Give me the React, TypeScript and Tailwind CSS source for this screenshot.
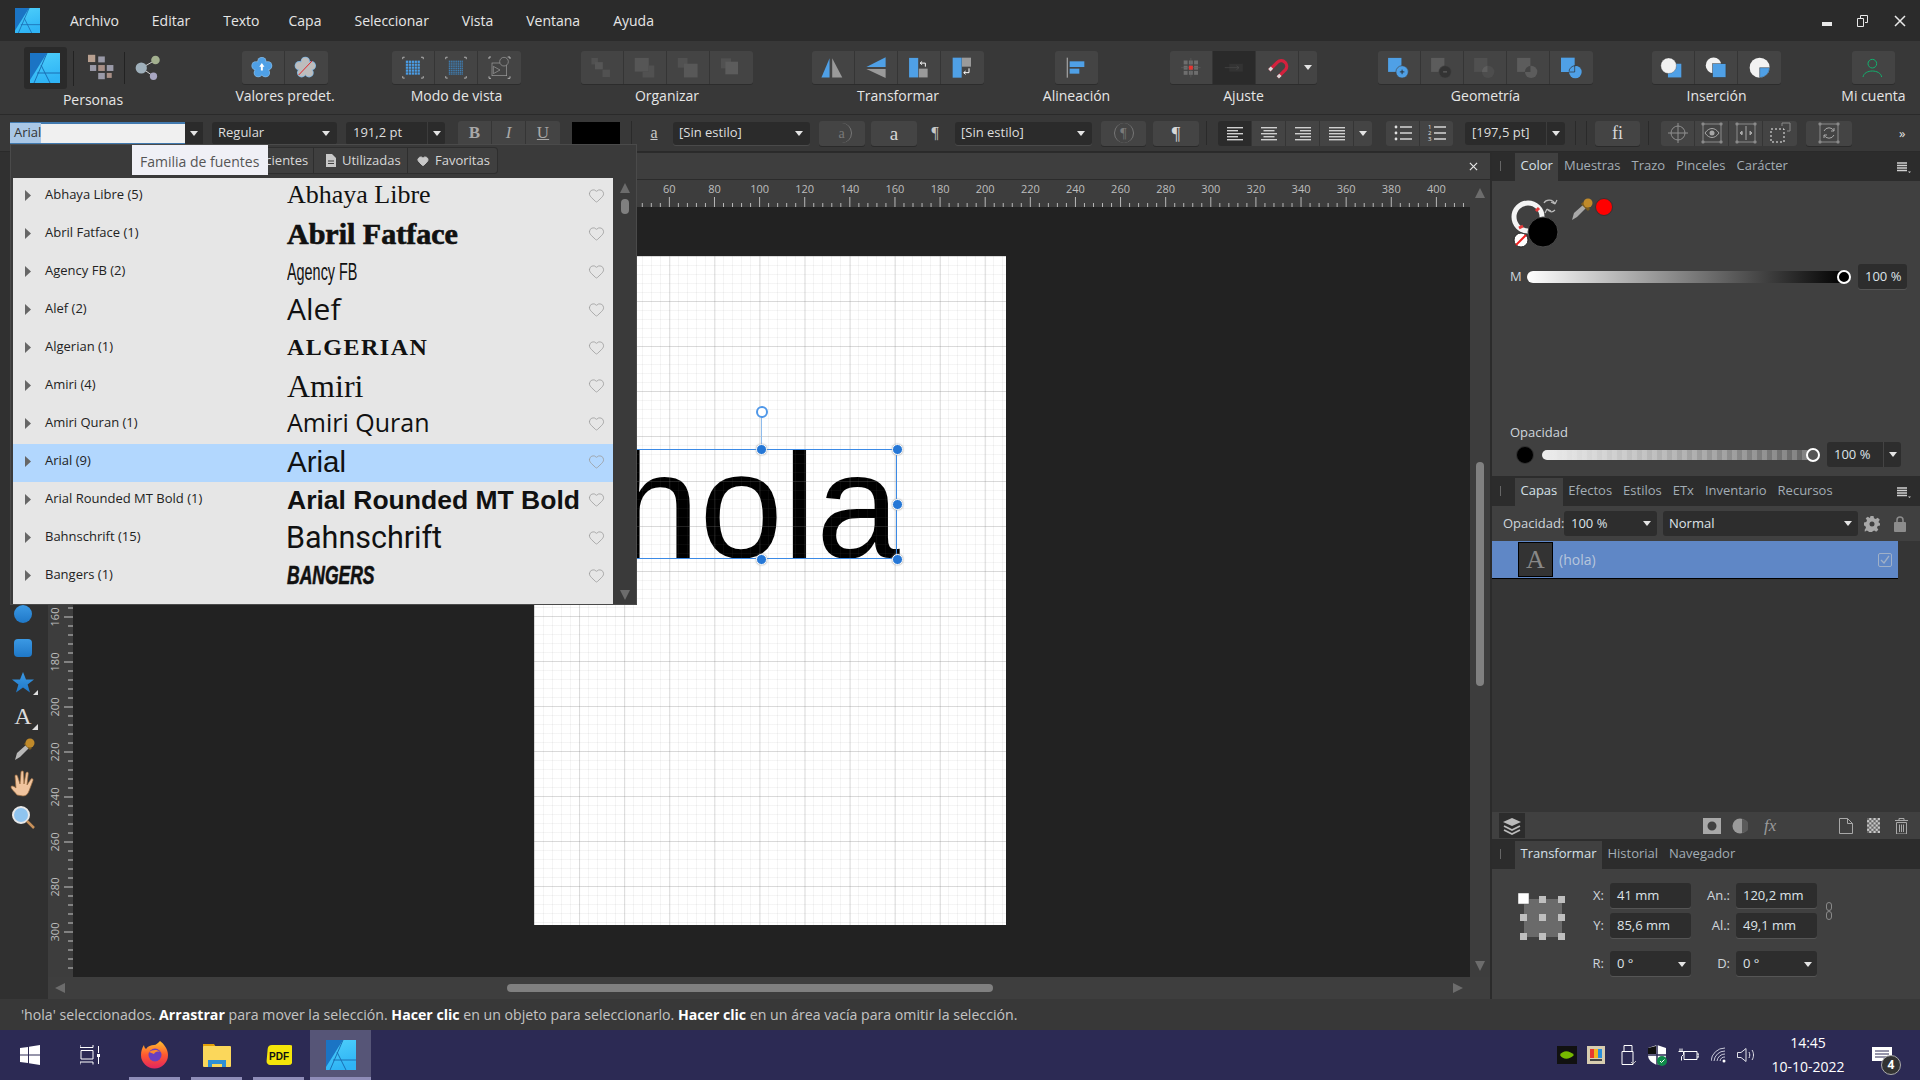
import type { ReactNode } from "react";
import { Heart } from "lucide-react";

// toolbar icons are drawn in a 129x99 box (3x the 43x33 button)
function Ico({ children }: { children?: ReactNode }) {
  return (
    <svg viewBox="0 0 129 99" className="h-full w-full">
      {children}
    </svg>
  );
}

function Btn({ children, dark }: { children?: ReactNode; dark?: boolean }) {
  return (
    <div className={`h-[33px] w-[43px] shrink-0 border-r border-[#353535] last:border-r-0 ${dark ? "bg-[#2a2a2a]" : "bg-[#444444]"}`}>
      <Ico>{children}</Ico>
    </div>
  );
}

function Group({ label, ml, children }: { label: string; ml: string; children: ReactNode }) {
  return (
    <div className={`flex flex-col items-center ${ml}`}>
      <div className="flex h-[33px] overflow-hidden rounded-[3px] shadow-[0_1px_0_#2c2c2c]">{children}</div>
      {/* zero width so a long label does not push the next group */}
      <div className="mt-[2px] flex w-0 justify-center">
        <span className="whitespace-nowrap text-[14px] leading-[20px] text-[#e6e6e6]">{label}</span>
      </div>
    </div>
  );
}

function Caret({ className = "" }: { className?: string }) {
  return (
    <svg viewBox="0 0 8 5" className={`h-[5px] w-[8px] shrink-0 ${className}`}>
      <path d="M0 0h8L4 5z" fill="#e4e4e4" />
    </svg>
  );
}

function AffinityLogo({ size }: { size: number }) {
  return (
    <svg viewBox="0 0 30 30" width={size} height={size}>
      <defs>
        <linearGradient id="afLogo" x1="0" y1="0" x2="0.3" y2="1">
          <stop offset="0" stopColor="#4fd0fb" />
          <stop offset="1" stopColor="#2fb4f5" />
        </linearGradient>
      </defs>
      <rect width="30" height="30" fill="url(#afLogo)" />
      <path d="M0 0h17L0 27z" fill="#1b74c4" />
      <path d="M17 0 4 30M11 12l9 18M7 20h23" stroke="#1b6fb4" strokeWidth="1" fill="none" />
    </svg>
  );
}

function Brackets({ color = "#c8c8c8" }: { color?: string }) {
  return (
    <path
      d="M32 24v-6h6M88 18h7v6M95 76v6h-7M38 82h-6v-6"
      transform="translate(1 0)"
      stroke={color}
      strokeWidth="2.5"
      fill="none"
    />
  );
}

function DotGrid({ n, step, size, color }: { n: number; step: number; size: number; color: string }) {
  const cells = [];
  for (let i = 0; i < n; i++) {
    for (let j = 0; j < n; j++) {
      cells.push(
        <rect key={`${i}-${j}`} x={64 - ((n - 1) * step) / 2 + i * step - size / 2} y={50 - ((n - 1) * step) / 2 + j * step - size / 2} width={size} height={size} fill={color} />,
      );
    }
  }
  return <>{cells}</>;
}

function Flower({ fill }: { fill: string }) {
  const petals = [0, 72, 144, 216, 288].map((a) => {
    const r = ((a - 90) * Math.PI) / 180;
    return { cx: 61 + 19 * Math.cos(r), cy: 50 + 19 * Math.sin(r) };
  });
  return (
    <>
      {petals.map((p) => (
        <circle key={p.cx} cx={p.cx} cy={p.cy} r="14" fill="#7fb4e0" />
      ))}
      {petals.map((p) => (
        <circle key={`i${p.cx}`} cx={p.cx} cy={p.cy} r="11.5" fill={fill} />
      ))}
      <circle cx="61" cy="50" r="20" fill={fill} />
    </>
  );
}

function Toolbar() {
  const dim = "#515151";
  const blue = "#4fa0e6";
  return (
    <div className="flex h-[74px] border-b border-[#2a2a2a] bg-[#383838] pl-[24px] pt-[6px]">
      <div className="flex w-[138px] flex-col">
        <div className="flex h-[42px] items-center">
          <div className="flex h-[42px] w-[43px] items-center justify-center rounded-[3px] bg-[#2a2a2a]">
            <AffinityLogo size={30} />
          </div>
          <div className="ml-[6px] h-[35px] w-px bg-[#222]" />
          <svg viewBox="225 30 90 90" width="30" height="30" className="ml-[12px]">
            <rect x="231" y="35" width="22" height="22" fill="#b8a090" />
            <rect x="262" y="40" width="20" height="18" fill="#9a9aa8" />
            <rect x="237" y="66" width="19" height="18" fill="#9a9aa8" />
            <rect x="262" y="66" width="20" height="18" fill="#a88f86" />
            <rect x="288" y="66" width="20" height="18" fill="#9a9aa8" />
            <rect x="262" y="90" width="20" height="19" fill="#9a9aa8" />
            <rect x="288" y="90" width="15" height="15" fill="#a88f86" />
          </svg>
          <div className="ml-[9px] h-[32px] w-px bg-[#222]" />
          <svg viewBox="372 30 84 84" width="28" height="28" className="ml-[9px]">
            <path d="M395 72 437 48M395 72l36 25" stroke="#d0d0d0" strokeWidth="3" />
            <circle cx="394" cy="72" r="17" fill="#9fb0bb" />
            <circle cx="437" cy="48" r="13" fill="#a3b08f" />
            <circle cx="431" cy="97" r="11" fill="#a8a6c2" />
          </svg>
        </div>
        <span className="mt-[1px] self-center whitespace-nowrap text-[14px] leading-[20px] text-[#e6e6e6]">Personas</span>
      </div>

      <div className="flex pt-[4px]">
        <Group label="Valores predet." ml="ml-[80px]">
          <Btn>
            <Flower fill={blue} />
            <path d="M61 36l8 11h-5v12h-6V47h-5z" fill="#fff" />
          </Btn>
          <Btn>
            <Flower fill="#bdbdbd" />
            <path d="M41 72 81 30" stroke="#e2252b" strokeWidth="3" />
          </Btn>
        </Group>
        <Group label="Modo de vista" ml="ml-[64px]">
          <Btn>
            <Brackets />
            <DotGrid n={5} step={9} size={7} color="#4a9de6" />
          </Btn>
          <Btn>
            <Brackets />
            <DotGrid n={8} step={5.6} size={4} color="#3f7fb5" />
          </Btn>
          <Btn>
            <Brackets />
            <rect x="42" y="36" width="44" height="38" fill="none" stroke="#a0a0a0" strokeWidth="2" />
            <circle cx="78" cy="32" r="13" fill="#444" stroke="#a0a0a0" strokeWidth="2" />
            <path d="M46 46v22l20-11z" fill="#444" stroke="#a0a0a0" strokeWidth="2" />
          </Btn>
        </Group>
        <Group label="Organizar" ml="ml-[60px]">
          <Btn>
            <rect x="32" y="20" width="20" height="20" fill={dim} />
            <rect x="43" y="33" width="24" height="22" fill="#565656" />
            <rect x="66" y="56" width="23" height="23" fill={dim} />
          </Btn>
          <Btn>
            <rect x="33" y="20" width="43" height="42" fill="#565656" />
            <path d="M93 43v37H57V62h19V43z" fill={dim} />
          </Btn>
          <Btn>
            <rect x="33" y="20" width="30" height="30" fill={dim} />
            <rect x="52" y="38" width="42" height="42" fill="#585858" />
          </Btn>
          <Btn>
            <rect x="33" y="22" width="30" height="30" fill={dim} />
            <rect x="46" y="32" width="38" height="38" fill="#5c5c5c" />
          </Btn>
        </Group>
        <Group label="Transformar" ml="ml-[59px]">
          <Btn>
            <path d="M29 80h25V21z" fill={blue} />
            <path d="M62 21l31 59H62z" fill="#9a9a9a" />
          </Btn>
          <Btn>
            <path d="M35 48 94 18v30z" fill={blue} />
            <path d="M35 54l59 28V54z" fill="#9a9a9a" />
          </Btn>
          <Btn>
            <rect x="34" y="20" width="28" height="60" fill={blue} />
            <rect x="64" y="53" width="27" height="27" fill="#9a9a9a" />
            <path d="M84 47V36H69m5-5-6 5 6 5" stroke="#fff" strokeWidth="3" fill="none" />
          </Btn>
          <Btn>
            <rect x="35" y="20" width="27" height="60" fill={blue} />
            <rect x="63" y="20" width="27" height="27" fill="#9a9a9a" />
            <path d="M84 52v13H69m5-5-6 5 6 5" stroke="#fff" strokeWidth="3" fill="none" />
          </Btn>
        </Group>
        <Group label="Alineación" ml="ml-[71px]">
          <Btn>
            <rect x="35" y="20" width="4" height="60" fill="#9a9a9a" />
            <rect x="44" y="31" width="44" height="17" fill={blue} />
            <rect x="44" y="53" width="29" height="15" fill={blue} />
          </Btn>
        </Group>
        <Group label="Ajuste" ml="ml-[72px]">
          <Btn>
            <DotGrid n={3} step={16} size={12} color="#6e6e6e" />
            <path d="M64 20v60M34 50h60" stroke="#5e5e5e" strokeWidth="2" />
            <rect x="58" y="44" width="12" height="12" fill="#e8322f" />
          </Btn>
          <Btn dark>
            <rect x="50" y="38" width="42" height="24" fill="#333" />
            <path d="M36 50h44m-8-6 8 6-8 6" stroke="#4c4c4c" strokeWidth="2" fill="none" />
          </Btn>
          <Btn>
            <path d="M41 58 66 33A17 17 0 0 1 90 57L67 80" stroke="#d4213d" strokeWidth="10" fill="none" />
            <path d="M41 58l8-8M67 80l8-8" stroke="#d8d8d8" strokeWidth="10" fill="none" />
          </Btn>
          <div className="flex h-[33px] w-[18px] items-center justify-center bg-[#444444]">
            <Caret />
          </div>
        </Group>
        <Group label="Geometría" ml="ml-[61px]">
          <Btn>
            <rect x="31" y="20" width="41" height="43" fill={blue} />
            <circle cx="74" cy="63" r="19" fill={blue} stroke="#444" strokeWidth="2" />
            <path d="M67 63h14M74 56v14" stroke="#222" strokeWidth="2.5" />
          </Btn>
          <Btn>
            <rect x="31" y="20" width="41" height="43" fill="#5c5c5c" />
            <circle cx="74" cy="63" r="19" fill="#333" stroke="#444" strokeWidth="2" />
            <path d="M68 63h12" stroke="#777" strokeWidth="2.5" />
          </Btn>
          <Btn>
            <rect x="31" y="20" width="41" height="43" fill="#505050" />
            <circle cx="74" cy="63" r="19" fill="#4d4d4d" />
            <path d="M55 63h17V44a19 19 0 0 0-17 19z" fill="#5e5e5e" />
          </Btn>
          <Btn>
            <rect x="31" y="20" width="41" height="43" fill="#5c5c5c" />
            <circle cx="74" cy="63" r="19" fill="#5c5c5c" />
            <path d="M55 63h17V44a19 19 0 0 0-17 19z" fill="#444" />
          </Btn>
          <Btn>
            <rect x="33" y="20" width="41" height="43" fill={blue} />
            <circle cx="76" cy="63" r="19" fill={blue} />
            <path d="M57 63h17V44" fill="none" stroke="#2c2c2c" strokeWidth="2" />
            <circle cx="76" cy="63" r="19" fill="none" stroke="#2c2c2c" strokeWidth="2" strokeDasharray="30 90" strokeDashoffset="60" />
          </Btn>
        </Group>
        <Group label="Inserción" ml="ml-[59px]">
          <Btn>
            <rect x="49" y="38" width="41" height="42" fill={blue} />
            <circle cx="51" cy="44" r="24" fill="#f2f2f2" stroke="#333" strokeWidth="1" />
          </Btn>
          <Btn>
            <circle cx="57" cy="43" r="24" fill="#f2f2f2" />
            <rect x="54" y="38" width="41" height="42" fill={blue} stroke="#333" strokeWidth="1.5" />
          </Btn>
          <Btn>
            <circle cx="65" cy="50" r="30" fill="#f2f2f2" />
            <path d="M65 50h30a30 30 0 0 1-30 30z" fill={blue} stroke="#333" strokeWidth="1.5" />
          </Btn>
        </Group>
        <Group label="Mi cuenta" ml="ml-[71px]">
          <Btn>
            <circle cx="61" cy="38" r="13" fill="none" stroke="#12b06e" strokeWidth="3" />
            <path d="M33 78c4-24 52-24 56 0" fill="none" stroke="#12b06e" strokeWidth="3" />
          </Btn>
        </Group>
      </div>
    </div>
  );
}

function Combo({ text, w, ml, textClass = "" }: { text: string; w: string; ml: string; textClass?: string }) {
  return (
    <div className={`flex h-[23px] items-center justify-between rounded-[3px] bg-[#2b2b2b] pl-[6px] pr-[7px] text-[13px] text-[#dedede] shadow-[0_1px_0_#4a4a4a] ${w} ${ml}`}>
      <span className={textClass}>{text}</span>
      <Caret />
    </div>
  );
}

function FmtBtn({ ml, children, w = "w-[46px]" }: { ml: string; children: ReactNode; w?: string }) {
  return (
    <div className={`flex h-[25px] items-center justify-center rounded-[3px] bg-[#444444] shadow-[0_1px_0_#2a2a2a] ${w} ${ml}`}>{children}</div>
  );
}

function Cell({ w = "w-[34px]", dark, children }: { w?: string; dark?: boolean; children: ReactNode }) {
  return (
    <div className={`flex h-full items-center justify-center border-r border-[#353535] last:border-r-0 ${w} ${dark ? "bg-[#2b2b2b]" : "bg-[#444444]"}`}>{children}</div>
  );
}

function AlignLines({ variant }: { variant: "l" | "c" | "r" | "j" }) {
  const rows = [16, 11, 16, 11, 16];
  return (
    <svg viewBox="0 0 18 15" width="18" height="15">
      {rows.map((w, i) => {
        const ww = variant === "j" ? 16 : w;
        const x = variant === "r" ? 17 - ww : variant === "c" ? 9 - ww / 2 : 1;
        return <rect key={i} x={x} y={1 + i * 3} width={ww} height="1.4" fill="#d0d0d0" />;
      })}
    </svg>
  );
}

function Corners({ children }: { children?: ReactNode }) {
  return (
    <svg viewBox="0 0 22 22" width="22" height="22">
      <rect x="2" y="2" width="18" height="18" fill="none" stroke="#8a8a8a" strokeWidth="1" />
      {[2, 20].map((x) =>
        [2, 20].map((y) => <rect key={`${x}${y}`} x={x - 1.5} y={y - 1.5} width="3" height="3" rx="1" fill="#8a8a8a" />),
      )}
      {children}
    </svg>
  );
}

function FormatBar() {
  return (
    <div className="flex h-[37px] items-center border-b border-[#2a2a2a] bg-[#383838] text-[13px] text-[#dedede]">
      <div className="ml-[10px] flex h-[23px] w-[193px]">
        <div className="flex h-full w-[175px] items-center border-y-2 border-y-[#4179ae] bg-[#f0f0f0] text-[13px] text-[#333]">
          <span className="bg-[#a9c7e6] pl-[4px] pr-0">Arial</span>
        </div>
        <div className="flex h-full w-[18px] items-center justify-center bg-[#2b2b2b]">
          <Caret />
        </div>
      </div>
      <Combo text="Regular" w="w-[125px]" ml="ml-[9px]" />
      <div className="ml-[9px] flex h-[23px] w-[99px] overflow-hidden rounded-[3px] bg-[#2b2b2b]">
        <span className="flex w-[81px] items-center pl-[7px]">191,2 pt</span>
        <span className="flex w-[18px] items-center justify-center border-l border-[#3c3c3c]">
          <Caret />
        </span>
      </div>
      <div className="ml-[13px] flex h-[25px] overflow-hidden rounded-[3px] [font-family:'Liberation_Serif',serif] text-[17px] text-[#a8a8a8]">
        <Cell>
          <b>B</b>
        </Cell>
        <Cell>
          <i>I</i>
        </Cell>
        <Cell>
          <u>U</u>
        </Cell>
      </div>
      <div className="ml-[12px] h-[23px] w-[48px] bg-black" />
      <div className="ml-[11px] h-[24px] w-px bg-[#2a2a2a]" />
      <span className="ml-[12px] w-[20px] text-center [font-family:'Liberation_Serif',serif] text-[16px] text-[#c8c8c8] underline">a</span>
      <Combo text="[Sin estilo]" w="w-[137px]" ml="ml-[9px]" />
      <FmtBtn ml="ml-[9px]">
        <div className="flex h-[20px] w-[20px] items-center justify-center rounded-full border-r border-[#777] [font-family:'Liberation_Serif',serif] text-[14px] text-[#7a7a7a]">a</div>
      </FmtBtn>
      <FmtBtn ml="ml-[6px]">
        <span className="[font-family:'Liberation_Serif',serif] text-[19px] leading-none text-[#d8d8d8]">a</span>
      </FmtBtn>
      <span className="ml-[9px] w-[18px] text-center [font-family:'Liberation_Serif',serif] text-[16px] text-[#c8c8c8]">¶</span>
      <Combo text="[Sin estilo]" w="w-[137px]" ml="ml-[11px]" />
      <FmtBtn ml="ml-[9px]" w="w-[45px]">
        <div className="flex h-[20px] w-[20px] items-center justify-center rounded-full border-x border-[#777] [font-family:'Liberation_Serif',serif] text-[14px] text-[#7a7a7a]">¶</div>
      </FmtBtn>
      <FmtBtn ml="ml-[7px]">
        <span className="[font-family:'Liberation_Serif',serif] text-[19px] leading-none text-[#d8d8d8]">¶</span>
      </FmtBtn>
      <div className="ml-[7px] h-[24px] w-px bg-[#2a2a2a]" />
      <div className="ml-[11px] flex h-[25px] overflow-hidden rounded-[3px]">
        <Cell dark>
          <AlignLines variant="l" />
        </Cell>
        <Cell>
          <AlignLines variant="c" />
        </Cell>
        <Cell>
          <AlignLines variant="r" />
        </Cell>
        <Cell>
          <AlignLines variant="j" />
        </Cell>
        <Cell w="w-[18px]">
          <Caret />
        </Cell>
      </div>
      <div className="ml-[14px] flex h-[25px] overflow-hidden rounded-[3px]">
        <Cell>
          <svg viewBox="0 0 18 16" width="18" height="16">
            {[2, 8, 14].map((y) => (
              <g key={y}>
                <circle cx="2" cy={y} r="1.4" fill="#e0e0e0" />
                <rect x="6" y={y - 0.7} width="12" height="1.4" fill="#e0e0e0" />
              </g>
            ))}
          </svg>
        </Cell>
        <Cell w="w-[33px]">
          <svg viewBox="0 0 18 18" width="18" height="18" className="overflow-visible">
            {[3, 9, 15].map((y, i) => (
              <g key={y}>
                <text x="0" y={y + 2} fontSize="6" fill="#e0e0e0" fontFamily="Open Sans, sans-serif">
                  {i + 1}
                </text>
                <rect x="6" y={y - 0.7} width="12" height="1.4" fill="#e0e0e0" />
              </g>
            ))}
          </svg>
        </Cell>
      </div>
      <div className="ml-[12px] flex h-[23px] w-[100px] overflow-hidden rounded-[3px] bg-[#2b2b2b]">
        <span className="flex w-[81px] items-center pl-[7px]">[197,5 pt]</span>
        <span className="flex w-[19px] items-center justify-center border-l border-[#3c3c3c]">
          <Caret />
        </span>
      </div>
      <div className="ml-[10px] h-[24px] w-px bg-[#2a2a2a]" />
      <div className="ml-[10px] h-[24px] w-px bg-[#2a2a2a]" />
      <FmtBtn ml="ml-[8px]" w="w-[45px]">
        <span className="[font-family:'Liberation_Serif',serif] text-[18px] leading-none text-[#d8d8d8]">fi</span>
      </FmtBtn>
      <div className="ml-[8px] h-[24px] w-px bg-[#2a2a2a]" />
      <div className="ml-[12px] flex h-[25px] overflow-hidden rounded-[3px]">
        <Cell>
          <svg viewBox="0 0 22 22" width="22" height="22">
            <circle cx="11" cy="11" r="7" fill="none" stroke="#8f8f8f" />
            <path d="M11 1v20M1 11h20" stroke="#8f8f8f" />
          </svg>
        </Cell>
        <Cell>
          <Corners>
            <path d="M4 11c4-6 10-6 14 0-4 6-10 6-14 0z" fill="none" stroke="#a8a8a8" />
            <circle cx="11" cy="11" r="2.5" fill="#a8a8a8" />
          </Corners>
        </Cell>
        <Cell>
          <Corners>
            <path d="M11 4v14M5 11h3M5 11l2-2v4zM17 11l-2-2v4z" stroke="#a8a8a8" fill="#a8a8a8" />
          </Corners>
        </Cell>
        <Cell>
          <svg viewBox="0 0 22 22" width="22" height="22">
            <rect x="2" y="7" width="13" height="13" fill="none" stroke="#eee" strokeDasharray="2 2" />
            <path d="M13 4V1h8v8h-3" fill="none" stroke="#8a8a8a" />
          </svg>
        </Cell>
      </div>
      <FmtBtn ml="ml-[9px]">
        <Corners>
          <path d="M6 9a5.5 5.5 0 0 1 10 0M16 13a5.5 5.5 0 0 1-10 0" fill="none" stroke="#a8a8a8" />
          <path d="M16 6v3h-3M6 16v-3h3" fill="none" stroke="#a8a8a8" />
        </Corners>
      </FmtBtn>
      <span className="ml-[47px] text-[13px] leading-none text-[#e0e0e0]">»</span>
    </div>
  );
}

function ToolIcons() {
  return (
    <div className="flex w-[48px] shrink-0 flex-col items-center bg-[#303030] pr-[2px] pt-[445px]">
      <svg viewBox="0 0 34 34" width="34" height="34">
        <defs>
          <linearGradient id="toolBlue" x1="0" y1="0" x2="0" y2="1">
            <stop offset="0" stopColor="#3b99e4" />
            <stop offset="1" stopColor="#1f78c8" />
          </linearGradient>
        </defs>
        <circle cx="17" cy="17" r="9" fill="url(#toolBlue)" />
      </svg>
      <svg viewBox="0 0 34 34" width="34" height="34">
        <rect x="8" y="8" width="18" height="18" rx="4" fill="url(#toolBlue)" />
      </svg>
      <svg viewBox="0 0 34 34" width="34" height="34">
        <path d="M17 7l3 7.5h8l-6.400 5 2.400 8L17 22.500 10 27.500l2.400-8L6 14.500h8z" fill="url(#toolBlue)" />
        <path d="M32 30v-5l-5 5z" fill="#e0e0e0" />
      </svg>
      <div className="relative flex h-[34px] w-[34px] items-center justify-center [font-family:'Liberation_Serif',serif] text-[24px] leading-none text-[#dcdcdc]">
        A
        <svg viewBox="0 0 6 6" className="absolute bottom-[3px] right-[2px] h-[6px] w-[6px]">
          <path d="M6 6V0L0 6z" fill="#e0e0e0" />
        </svg>
      </div>
      <svg viewBox="0 0 34 34" width="34" height="34">
        <path d="M9 27l2-7 9-8 3 3-9 9z" fill="#b8b8b8" />
        <path d="M19 10l6 6" stroke="#7a5a1e" strokeWidth="3" />
        <circle cx="24" cy="10" r="4.500" fill="#c08a2a" />
      </svg>
      <svg viewBox="0 0 34 34" width="34" height="34">
        <path d="M11 28c-2-3-6-6-6-8s3-1 5 1l-1-12c0-1.500 2-1.500 2.500 0L14 17l1-12c0-1.500 2.500-1.500 2.500 0L18 17l2-11c.5-1.500 2.500-1 2.300.5L21 18l4-6c1-1 2.500 0 2 1.500L23 24c-1 3-3 5-6 5z" fill="#f0c49e" stroke="#9a6a3c" strokeWidth="0.7" />
      </svg>
      <svg viewBox="0 0 34 34" width="34" height="34">
        <circle cx="15" cy="14" r="8" fill="#8fc4ef" stroke="#e8e8e8" strokeWidth="2" />
        <path d="M21 20l7 7" stroke="#c8915a" strokeWidth="2.500" />
      </svg>
    </div>
  );
}

const topTicks = Array.from({ length: 130 }, (_, i) => i * 4);
const sideTicks = Array.from({ length: 80 }, (_, i) => i * 4);

function TopRuler() {
  return (
    <svg viewBox="0 0 1397 27" width="1397" height="27" className="block shrink-0">
      {topTicks.map((v) => {
        const x = 461 + v * 2.256;
        if (x > 1397) return null;
        const major = v % 20 === 0;
        return (
          <g key={v}>
            <line x1={x} x2={x} y1={major ? 17 : 23} y2="27" stroke="#b8b8b8" strokeWidth="1" />
            {major ? (
              <text x={x} y="13" textAnchor="middle" fontSize="11" fill="#bdbdbd" fontFamily="Open Sans, sans-serif">
                {v}
              </text>
            ) : null}
          </g>
        );
      })}
    </svg>
  );
}

function SideRuler() {
  return (
    <svg viewBox="0 0 25 770" width="25" height="770" className="block shrink-0 bg-[#3d3d3d]">
      {sideTicks.map((v) => {
        const y = 50 + v * 2.25;
        const major = v % 20 === 0;
        return (
          <g key={v}>
            <line x1={major ? 16 : 20} x2="25" y1={y} y2={y} stroke="#c8c8c8" strokeWidth="1" />
            {major ? (
              <text x="0" y="0" transform={`translate(11 ${y}) rotate(-90)`} textAnchor="middle" fontSize="11" fill="#bdbdbd" fontFamily="Open Sans, sans-serif">
                {v}
              </text>
            ) : null}
          </g>
        );
      })}
    </svg>
  );
}

function Handle({ className }: { className: string }) {
  return <div className={`absolute h-[11px] w-[11px] rounded-full border border-white bg-[#2577d6] shadow-[0_0_2px_#999] ${className}`} />;
}

function Canvas() {
  return (
    <div className="relative h-[770px] w-[1397px] overflow-hidden bg-[#222222]">
      <div className="absolute left-[461px] top-[49px] h-[669px] w-[472px] overflow-hidden bg-white">
        <span className="absolute left-[82px] top-[175px] whitespace-nowrap [font-family:'Liberation_Sans',sans-serif] text-[150px] leading-none text-black">hola</span>
        <div className="absolute inset-0 bg-[linear-gradient(rgba(120,120,120,0.22)_1px,transparent_1px),linear-gradient(90deg,rgba(120,120,120,0.22)_1px,transparent_1px),linear-gradient(rgba(120,120,120,0.08)_1px,transparent_1px),linear-gradient(90deg,rgba(120,120,120,0.08)_1px,transparent_1px)] bg-[size:45.12px_45px,45.12px_45px,9px_9px,9px_9px]" />
        <div className="absolute left-[92px] top-[193px] h-[110px] w-[271px] border border-[#3b8ae6]" />
        <div className="absolute left-[227px] top-[161px] h-[32px] w-px bg-[#8fbcec]" />
        <div className="absolute left-[222px] top-[150px] h-[12px] w-[12px] rounded-full border-2 border-[#4f97e8] bg-white" />
        <Handle className="left-[222px] top-[188px]" />
        <Handle className="left-[358px] top-[188px]" />
        <Handle className="left-[358px] top-[243px]" />
        <Handle className="left-[222px] top-[298px]" />
        <Handle className="left-[358px] top-[298px]" />
      </div>
    </div>
  );
}

function Arrow({ dir, className = "" }: { dir: "u" | "d" | "l" | "r"; className?: string }) {
  const d = { u: "M0 10 5 0l5 10z", d: "M0 0h10L5 10z", l: "M10 0v10L0 5z", r: "M0 0v10l10-5z" }[dir];
  return (
    <svg viewBox="0 0 10 10" className={`h-[10px] w-[10px] ${className}`}>
      <path d={d} fill="#6c6c6c" />
    </svg>
  );
}

function Center() {
  return (
    <div className="flex w-[1442px] flex-col">
      <div className="flex h-[28px] items-center justify-end border-y border-[#2b2b2b] bg-[#3e3e3e] pr-[12px]">
        <svg viewBox="0 0 10 10" width="9" height="9">
          <path d="M1 1l8 8M9 1l-8 8" stroke="#e8e8e8" strokeWidth="1.300" />
        </svg>
      </div>
      <div className="flex h-[27px]">
        <div className="w-[25px] bg-[#3d3d3d]" />
        <div className="bg-[#3d3d3d]">
          <TopRuler />
        </div>
        <div className="flex w-[20px] justify-center bg-[#3d3d3d] pt-[8px]">
          <Arrow dir="u" />
        </div>
      </div>
      <div className="flex h-[770px]">
        <SideRuler />
        <Canvas />
        <div className="flex w-[20px] flex-col items-center bg-[#3d3d3d] pb-[6px]">
          <div className="mt-[255px] h-[224px] w-[8px] rounded-[4px] bg-[#808080]" />
          <Arrow dir="d" className="mt-auto" />
        </div>
      </div>
      <div className="flex h-[22px] items-center bg-[#3e3e3e] pl-[7px]">
        <Arrow dir="l" />
        <div className="ml-[442px] h-[8px] w-[486px] rounded-[4px] bg-[#808080]" />
        <Arrow dir="r" className="ml-[460px]" />
      </div>
    </div>
  );
}

function MenuIcon() {
  return (
    <svg viewBox="0 0 14 11" width="14" height="11">
      <path d="M0 1h10M0 3.500h10M0 6h10M0 8.500h10" stroke="#d0d0d0" strokeWidth="1.500" />
      <path d="M11 9.500h3l-1.500 1.500z" fill="#d0d0d0" />
    </svg>
  );
}

function PanelTabs({ tabs, active, menu = true, first }: { tabs: string[]; active: string; menu?: boolean; first?: boolean }) {
  return (
    <div className={`flex items-end bg-[#2c2c2c] pl-[8px] pr-[9px] text-[13px] text-[#a3adb5] ${first ? "h-[29px]" : "h-[30px]"}`}>
      <div className="mb-[10px] mr-[14px] h-[10px] w-px bg-[#666]" />
      {tabs.map((t) => (
        <span key={t} className={`flex h-[28px] items-center px-[5.5px] pb-[2px] ${t === active ? "bg-[#404040] text-[#d6e0e8]" : ""}`}>
          {t}
        </span>
      ))}
      {menu ? (
        <div className="mb-[8px] ml-auto">
          <MenuIcon />
        </div>
      ) : null}
    </div>
  );
}

function Field({ text, w = "w-[81px]", caret }: { text: string; w?: string; caret?: boolean }) {
  return (
    <div className={`flex h-[25px] items-center justify-between rounded-[3px] bg-[#2d2d2d] pl-[7px] pr-[5px] pt-[1px] text-[13px] text-[#dde3e8] shadow-[0_1px_0_#555] ${w}`}>
      <span>{text}</span>
      {caret ? <Caret /> : null}
    </div>
  );
}

function RightPanel() {
  return (
    <div className="ml-[2px] flex w-[428px] flex-col bg-[#353535] text-[13px] text-[#cfd6dc]">
      <PanelTabs tabs={["Color", "Muestras", "Trazo", "Pinceles", "Carácter"]} active="Color" first />
      <div className="flex h-[295px] flex-col bg-[#404040]">
        <div className="ml-[19px] mt-[16px] flex h-[52px] items-start">
          <svg viewBox="0 0 50 52" width="50" height="52">
            <circle cx="17" cy="20" r="14" fill="none" stroke="#f4f4f4" strokeWidth="5" />
            <path d="M8 31l4-2M28 11l-3 3" stroke="#e83a3a" strokeWidth="3" />
            <circle cx="32" cy="35" r="15" fill="#000" stroke="#4a4a4a" strokeWidth="1" />
            <circle cx="10" cy="43" r="7" fill="#fff" stroke="#222" />
            <path d="M5 48l10-10" stroke="#e22" strokeWidth="2" />
            <path d="M32 9c2-4 9-4 11 1M43 10l2-4M43 10l-4-2M43 16c-3 3-6 2-8-1M35 15l-2 4M35 15l4 2" stroke="#bbb" fill="none" strokeWidth="1.200" transform="translate(1 -3)" />
          </svg>
          <svg viewBox="0 0 24 24" width="24" height="24" className="ml-[9px] mt-[1px]">
            <path d="M2 22l2-7 9-8 3 3-9 9z" fill="#a8a8a8" />
            <path d="M12 5l7 7" stroke="#7a5a1e" strokeWidth="3" />
            <circle cx="18" cy="5" r="4.500" fill="#c08a2a" />
          </svg>
          <div className="ml-[1px] mt-[1px] h-[18px] w-[18px] rounded-full border border-[#333] bg-[#ff0000]" />
        </div>
        <div className="mt-[15px] flex h-[25px] items-center pl-[18px]">
          <span className="w-[17px] text-[13px]">M</span>
          <div className="relative h-[12px] w-[319px] rounded-[6px] bg-[linear-gradient(90deg,#fff,#000)]">
            <div className="absolute right-[-5px] top-[-1px] h-[14px] w-[14px] rounded-full border-2 border-white bg-black" />
          </div>
          <div className="ml-[12px]">
            <Field text="100 %" w="w-[49px]" />
          </div>
        </div>
        <div className="mt-auto pb-[9px] pl-[18px]">
          <span className="block leading-[18px]">Opacidad</span>
          <div className="mt-[1px] flex h-[25px] items-center">
            <div className="ml-[6px] h-[18px] w-[18px] rounded-full border border-[#333] bg-black" />
            <div className="relative ml-[8px] h-[10px] w-[278px] rounded-[5px] bg-[#666] bg-[linear-gradient(90deg,#eee,rgba(80,80,80,0.4)),repeating-linear-gradient(90deg,#999_0_5px,#666_5px_10px)]">
              <div className="absolute right-0 top-[-2px] h-[14px] w-[14px] rounded-full border-2 border-white bg-[#555]" />
            </div>
            <div className="ml-[7px] flex h-[25px] w-[74px] rounded-[3px] bg-[#2d2d2d] text-[#dde3e8]">
              <span className="flex w-[56px] items-center pl-[7px]">100 %</span>
              <span className="flex flex-1 items-center justify-center border-l border-[#444]">
                <Caret />
              </span>
            </div>
          </div>
        </div>
      </div>
      <PanelTabs tabs={["Capas", "Efectos", "Estilos", "ETx", "Inventario", "Recursos"]} active="Capas" />
      <div className="flex h-[35px] items-center bg-[#404040] pl-[11px]">
        <span className="w-[61px]">Opacidad:</span>
        <div className="flex h-[25px] w-[93px] items-center justify-between rounded-[3px] bg-[#2d2d2d] pl-[7px] pr-[6px] text-[#dde3e8]">
          100 %
          <Caret />
        </div>
        <div className="ml-[6px] flex h-[25px] w-[195px] items-center justify-between rounded-[3px] bg-[#2d2d2d] pl-[6px] pr-[6px] text-[#dde3e8]">
          Normal
          <Caret />
        </div>
        <svg viewBox="0 0 16 16" width="16" height="16" className="ml-[6px]">
          <path d="M6.500 0h3l.5 2.300 1.700.7 2-1.300 2.100 2.100-1.300 2 .7 1.700L16 6.500v3l-2.300.5-.7 1.700 1.300 2-2.100 2.100-2-1.300-1.700.7-.5 2.300h-3l-.5-2.300-1.700-.7-2 1.300L.7 13.700l1.300-2-.7-1.700L0 9.500v-3l2.300-.5.7-1.700-1.300-2L3.800 .7l2 1.300 .2-.3z" fill="#a8a8a8" />
          <circle cx="8" cy="8" r="2.500" fill="#404040" />
        </svg>
        <svg viewBox="0 0 12 16" width="12" height="16" className="ml-[14px]">
          <rect y="6" width="12" height="10" rx="1" fill="#8c8c8c" />
          <path d="M3 6V4a3 3 0 0 1 6 0v2" stroke="#8c8c8c" strokeWidth="1.500" fill="none" />
        </svg>
      </div>
      <div className="h-[271px] bg-[#353535] pr-[22px]">
        <div className="flex h-[38px] items-center border-b border-black bg-[#5f87c6] pl-[26px]">
          <div className="flex h-[35px] w-[35px] items-center justify-center border border-black bg-[#333] [font-family:'Liberation_Serif',serif] text-[26px] leading-none text-[#888]">A</div>
          <span className="ml-[6px] text-[14px] text-[#b7c6dc]">(hola)</span>
          <div className="ml-auto mr-[6px] flex h-[14px] w-[14px] items-center justify-center rounded-[2px] border border-[#9fb0c8]">
            <svg viewBox="0 0 10 10" width="10" height="10">
              <path d="M1 5l3 3 5-7" stroke="#9fb0c8" fill="none" strokeWidth="1.300" />
            </svg>
          </div>
        </div>
      </div>
      <div className="flex h-[27px] items-center bg-[#404040] pl-[7px]">
        <div className="flex h-[25px] w-[26px] items-center justify-center bg-[#2c2c2c]">
          <svg viewBox="0 0 20 18" width="20" height="18">
            <path d="M10 1l9 4-9 4-9-4z" fill="#bbb" />
            <path d="M2 9l8 4 8-4M2 13l8 4 8-4" stroke="#bbb" strokeWidth="1.800" fill="none" />
          </svg>
        </div>
        <svg viewBox="0 0 18 16" width="18" height="16" className="ml-[178px]">
          <path fillRule="evenodd" d="M0 0h18v16H0zM9 3.500a4.500 4.500 0 1 0 0 9 4.500 4.500 0 0 0 0-9z" fill="#a8a8a8" />
        </svg>
        <svg viewBox="0 0 16 16" width="16" height="16" className="ml-[11px]">
          <circle cx="8" cy="8" r="7.500" fill="#9a9a9a" />
          <path d="M10 1a7 7 0 0 1 0 14z" fill="#5a5a5a" />
        </svg>
        <span className="ml-[16px] w-[20px] [font-family:'Liberation_Serif',serif] text-[17px] italic leading-none text-[#9a9a9a]">fx</span>
        <svg viewBox="0 0 14 16" width="14" height="16" className="ml-[55px]">
          <path d="M.5.500h8l5 5v10H.5zM8.500.500v5h5" fill="none" stroke="#a8a8a8" />
        </svg>
        <svg viewBox="0 0 12 14" width="13" height="15" className="ml-[14px]">
          <rect width="12" height="14" fill="#666" />
          {[0, 1, 2, 3, 4, 5, 6].map((r) =>
            [0, 1, 2, 3, 4, 5].map((c) => ((r + c) % 2 ? <rect key={`${r}${c}`} x={c * 2} y={r * 2} width="2" height="2" fill="#c8c8c8" /> : null)),
          )}
        </svg>
        <svg viewBox="0 0 13 16" width="13" height="16" className="ml-[15px]">
          <path d="M0 2.500h13M4 2V.5h5V2M1.500 4.500h10V16h-10zM4.500 6.500v7.500M6.500 6.500v7.500M8.500 6.500v7.500" stroke="#a8a8a8" fill="none" />
        </svg>
      </div>
      <PanelTabs tabs={["Transformar", "Historial", "Navegador"]} active="Transformar" menu={false} />
      <div className="flex h-[130px] bg-[#404040]">
        <svg viewBox="0 0 48 48" width="48" height="48" className="ml-[26px] mt-[24px] shrink-0">
          <rect x="6" y="6" width="38" height="38" fill="#6a6a6a" />
          {[3, 21, 40].map((y) => [2, 21, 40].map((x) => <rect key={`${x}${y}`} x={x} y={y} width="7" height="7" fill="#bfbfbf" />))}
          <rect x="0" y="0" width="11" height="11" fill="#fff" stroke="#555" strokeWidth="0.5" />
        </svg>
        <div className="flex flex-col pt-[14px]">
          <div className="flex items-center">
            <span className="w-[38px] text-right">X:</span>
            <div className="ml-[6px]">
              <Field text="41 mm" />
            </div>
            <span className="w-[39px] text-right">An.:</span>
            <div className="ml-[6px]">
              <Field text="120,2 mm" />
            </div>
          </div>
          <div className="mt-[5px] flex items-center">
            <span className="w-[38px] text-right">Y:</span>
            <div className="ml-[6px]">
              <Field text="85,6 mm" />
            </div>
            <span className="w-[39px] text-right">Al.:</span>
            <div className="ml-[6px]">
              <Field text="49,1 mm" />
            </div>
          </div>
          <div className="mt-[13px] flex items-center">
            <span className="w-[38px] text-right">R:</span>
            <div className="ml-[6px]">
              <Field text="0 °" caret />
            </div>
            <span className="w-[39px] text-right">D:</span>
            <div className="ml-[6px]">
              <Field text="0 °" caret />
            </div>
          </div>
        </div>
        <svg viewBox="0 0 6 18" width="6" height="18" className="ml-[9px] mt-[33px]">
          <rect x=".5" y=".5" width="5" height="8" rx="2.500" fill="none" stroke="#8a8a8a" />
          <rect x=".5" y="9.500" width="5" height="8" rx="2.500" fill="none" stroke="#8a8a8a" />
        </svg>
      </div>
    </div>
  );
}

function TaskItem({ children, ml, active }: { children: ReactNode; ml?: string; active?: boolean }) {
  return (
    <div className={`relative flex h-[50px] items-center justify-center ${active ? "w-[61px] bg-[#565577]" : "w-[51px]"} ${ml ?? ""}`}>
      {children}
      <div className="absolute bottom-0 left-0 h-[3px] w-full bg-[#8f8db8]" />
    </div>
  );
}

function Taskbar() {
  return (
    <div className="flex h-[50px] items-center bg-[#2c2a54] text-white">
      <svg viewBox="0 0 20 20" width="20" height="20" className="ml-[20px]">
        <path d="M0 3l8-1v7.500H0zM9 1.800 20 0v9.500H9zM0 10.500h8V18l-8-1zM9 10.500h11V20L9 18.200z" fill="#fff" />
      </svg>
      <svg viewBox="0 0 20 20" width="20" height="20" className="ml-[40px]">
        <path d="M0 0v2.500h13V0M1 5.500h12v8.500H1zM0 19.500V17h13v2.500M18.500 1v7M18.500 12v7" stroke="#fff" fill="none" />
        <rect x="17" y="9" width="3" height="3" fill="#fff" />
      </svg>
      <TaskItem ml="ml-[29px]">
        <svg viewBox="0 0 30 30" width="30" height="30">
          <defs>
            <linearGradient id="ffx" x1="0.5" y1="0" x2="0.5" y2="1">
              <stop offset="0" stopColor="#ffc12e" />
              <stop offset="0.5" stopColor="#ff5a30" />
              <stop offset="1" stopColor="#e3245f" />
            </linearGradient>
          </defs>
          <path d="M20 1c4 3 8 8 8 14a13.500 13.500 0 0 1-27 0C1 11 2 8 4 5c0 2 1 3 2 4 2-3 5-4 8-4 2 0 4-2 6-4z" fill="url(#ffx)" />
          <circle cx="15" cy="15" r="6.500" fill="#6a3fc0" />
          <path d="M9 12c3-2 8-3 11 0-3-1-5 0-6 2z" fill="#ff8a2e" />
        </svg>
      </TaskItem>
      <TaskItem ml="ml-[11px]">
        <svg viewBox="0 0 28 24" width="28" height="24">
          <path d="M0 1h11l2 3h-13z" fill="#e3a008" />
          <rect y="3" width="28" height="21" rx="1" fill="#fbd75b" />
          <path d="M5 24v-7h18v7h-4v-3H9v3z" fill="#2f8fd6" />
        </svg>
      </TaskItem>
      <TaskItem ml="ml-[11px]">
        <svg viewBox="0 0 26 20" width="26" height="20">
          <rect width="26" height="20" rx="4" fill="#f5e50a" transform="skewX(-5) translate(2 0)" />
          <text x="13" y="15" textAnchor="middle" fontSize="10" fontWeight="700" fill="#111" fontFamily="Liberation Sans, sans-serif">
            PDF
          </text>
        </svg>
      </TaskItem>
      <TaskItem ml="ml-[6px]" active>
        <AffinityLogo size={30} />
      </TaskItem>
      <svg viewBox="0 0 20 18" width="20" height="18" className="ml-[1186px]">
        <rect width="20" height="20" fill="#111" />
        <path d="M3 9c3-5 9-5 14 0-5 5-11 5-14 0z" fill="#76b900" />
      </svg>
      <svg viewBox="0 0 18 18" width="18" height="18" className="ml-[10px]">
        <rect width="18" height="18" fill="#d8cdb0" />
        <rect x="3" y="3" width="4" height="9" fill="#e8392f" />
        <rect x="7" y="3" width="4" height="9" fill="#f3b61f" />
        <rect x="11" y="3" width="4" height="9" fill="#2a8fdc" />
        <rect x="3" y="13" width="12" height="2" fill="#444" />
      </svg>
      <svg viewBox="0 0 16 20" width="16" height="20" className="ml-[16px]">
        <path d="M3 .5h8v6H3zM1 6.500h11v13H1z" fill="none" stroke="#fff" />
        <path d="M10 17l2 2 3-3" stroke="#bbb" fill="none" />
      </svg>
      <svg viewBox="0 0 20 21" width="20" height="21" className="ml-[10px]">
        <path d="M10 0l9 3v7c0 5-4 8-9 10-5-2-9-5-9-10V3z" fill="#fff" />
        <path d="M10 0v20M1 10h18" stroke="#2c2a54" strokeWidth="1.500" />
        <path d="M1 3 9 1v8H1z" fill="#111" />
        <circle cx="15" cy="16" r="5" fill="#0f8a4a" />
        <path d="M13 16l1.500 1.500L17.500 14.500" stroke="#fff" fill="none" />
      </svg>
      <svg viewBox="0 0 22 14" width="22" height="14" className="ml-[10px]">
        <path d="M7 3.500h13v8H7zM20 6h2v3h-2M3 .5v3M5 .5v3M1.500 3.500h5v3l-2 2v4" stroke="#fff" fill="none" />
      </svg>
      <svg viewBox="0 0 16 16" width="16" height="16" className="ml-[12px]">
        <path d="M0 14A14 14 0 0 1 14 1M3 14A11 11 0 0 1 14 4M6 14a8 8 0 0 1 8-7M9 14a5 5 0 0 1 5-4" stroke="#c8c8d8" fill="none" />
        <circle cx="13" cy="14" r="1.500" fill="#fff" />
      </svg>
      <svg viewBox="0 0 20 14" width="20" height="14" className="ml-[10px]">
        <path d="M.5 4.500H4L9 .5v13L4 9.500H.5zM12 4c1 2 1 4 0 6M15 2c2 3 2 7 0 10" stroke="#e0e0e8" fill="none" />
      </svg>
      <div className="ml-[6px] flex w-[90px] flex-col items-center text-[14px] leading-[24px]">
        <span>14:45</span>
        <span>10-10-2022</span>
      </div>
      <div className="relative ml-[19px]">
        <svg viewBox="0 0 20 17" width="20" height="17">
          <path d="M0 0h20v14H0z" fill="#fff" />
          <path d="M3 4h14M3 7h14M3 10h14" stroke="#2c2a54" />
        </svg>
        <span className="absolute left-[9px] top-[8px] flex h-[20px] w-[20px] items-center justify-center rounded-full border border-[#aaa] bg-[#333] text-[12px] font-bold leading-none text-white">4</span>
      </div>
    </div>
  );
}

type FontRow = { name: string; sample: string; cls: string };

const fonts: FontRow[] = [
  { name: "Abhaya Libre (5)", sample: "Abhaya Libre", cls: "[font-family:'Liberation_Serif',serif] text-[26px] pb-[5px]" },
  { name: "Abril Fatface (1)", sample: "Abril Fatface", cls: "[font-family:'Liberation_Serif',serif] font-bold text-[30px] pb-[2px] [-webkit-text-stroke:0.7px_#111]" },
  { name: "Agency FB (2)", sample: "Agency FB", cls: "[font-family:'Liberation_Sans',sans-serif] text-[24px] pb-[2px] origin-left scale-x-[0.6]" },
  { name: "Alef (2)", sample: "Alef", cls: "[font-family:'Open_Sans',sans-serif] text-[30px] pb-[5px]" },
  { name: "Algerian (1)", sample: "ALGERIAN", cls: "[font-family:'Liberation_Serif',serif] font-bold text-[24px] pb-[5px] tracking-[1.5px]" },
  { name: "Amiri (4)", sample: "Amiri", cls: "[font-family:'Liberation_Serif',serif] text-[32px] pb-[3px]" },
  { name: "Amiri Quran (1)", sample: "Amiri Quran", cls: "[font-family:'Open_Sans',sans-serif] text-[25px] pb-[5px]" },
  { name: "Arial (9)", sample: "Arial", cls: "[font-family:'Liberation_Sans',sans-serif] text-[29.5px] pb-[3px]" },
  { name: "Arial Rounded MT Bold (1)", sample: "Arial Rounded MT Bold", cls: "[font-family:'Liberation_Sans',sans-serif] font-bold text-[26.5px] pb-[2px]" },
  { name: "Bahnschrift (15)", sample: "Bahnschrift", cls: "[font-family:'Roboto',sans-serif] text-[30.5px] pb-[1px] -ml-[1px]" },
  { name: "Bangers (1)", sample: "BANGERS", cls: "[font-family:'Liberation_Sans',sans-serif] font-bold italic text-[25px] pb-[4px] origin-left scale-x-[0.7] [-webkit-text-stroke:0.6px_#111]" },
];

function FontDropdown() {
  return (
    <div className="absolute left-[10px] top-[144px] z-10 flex h-[461px] w-[627px] flex-col border border-[#4a4a4a] bg-[#3a3a3a] text-[13px]">
      <div className="flex h-[33px] shrink-0 pl-[209px] pt-[3px] text-[#d8d8d8]">
        <div className="flex h-[25px] overflow-hidden rounded-[3px] bg-[#3f3f3f] shadow-[0_0_0_1px_#2e2e2e]">
          <span className="flex w-[94px] items-center border-r border-[#2e2e2e] pl-[30px]">Recientes</span>
          <span className="flex w-[94px] items-center gap-[6px] border-r border-[#2e2e2e] pl-[12px]">
            <svg viewBox="0 0 10 13" width="10" height="13">
              <path d="M0 0h6l4 4v9H0z" fill="#c8c8c8" />
              <path d="M2 7h6M2 9.500h6" stroke="#3f3f3f" />
            </svg>
            Utilizadas
          </span>
          <span className="flex w-[89px] items-center gap-[6px] pl-[9px]">
            <Heart size={12} fill="#c8c8c8" stroke="#c8c8c8" />
            Favoritas
          </span>
        </div>
      </div>
      <div className="flex min-h-0 flex-1">
        <div className="ml-[2px] h-[426px] w-[601px] overflow-hidden bg-[#e6e6e6] text-[#222]">
          {fonts.map((f) => (
            <div key={f.name} className={`flex h-[38px] items-center ${f.name === "Arial (9)" ? "bg-[#b2d7fe]" : ""}`}>
              <svg viewBox="0 0 6 11" width="6" height="11" className="mb-[4px] ml-[12px] shrink-0">
                <path d="M0 0l6 5.500L0 11z" fill="#666" />
              </svg>
              <span className="mb-[5px] ml-[14px] w-[242px] shrink-0 whitespace-nowrap">{f.name}</span>
              <span className={`whitespace-nowrap leading-none text-[#111] ${f.cls}`}>{f.sample}</span>
              <Heart size={17} strokeWidth={1.1} stroke="#9a9a9a" className="mb-[3px] ml-auto mr-[8px] shrink-0" />
            </div>
          ))}
          <div className="flex h-[38px] items-center pl-[274px]">
            <span className="pt-[14px] [font-family:'Roboto',sans-serif] text-[28px] font-bold leading-none text-[#111]">Bahnschrift SemiBold</span>
          </div>
        </div>
        <div className="flex w-[23px] flex-col items-center pt-[5px]">
          <Arrow dir="u" />
          <div className="mt-[6px] h-[15px] w-[8px] rounded-[4px] bg-[#808080]" />
          <Arrow dir="d" className="mb-[4px] mt-auto" />
        </div>
      </div>
    </div>
  );
}

export default function App() {
  return (
    <div className="relative h-[1080px] w-[1920px] overflow-hidden bg-[#2b2b2b] [font-family:'Open_Sans',sans-serif]">
      <div className="flex h-[41px] items-center bg-[#2b2b2b] pl-[15px] text-[14px] text-[#e6e6e6]">
        <AffinityLogo size={25} />
        <nav className="ml-[30px] flex gap-[33px]">
          <span>Archivo</span>
          <span>Editar</span>
          <span>Texto</span>
          <span className="-ml-[4px]">Capa</span>
          <span>Seleccionar</span>
          <span>Vista</span>
          <span>Ventana</span>
          <span>Ayuda</span>
        </nav>
        <div className="ml-auto flex items-center pr-[14px]">
          <svg viewBox="0 0 10 5" width="10" height="5" className="mt-[7px]">
            <rect width="10" height="4" fill="#e8e8e8" />
          </svg>
          <svg viewBox="0 0 11 12" width="11" height="12" className="ml-[25px]">
            <path d="M3.500 3V.5h7v7H8M.5 3.500h6v8h-6z" fill="none" stroke="#e8e8e8" />
          </svg>
          <svg viewBox="0 0 12 12" width="12" height="12" className="ml-[26px]">
            <path d="M1 1l10 10M11 1 1 11" stroke="#e8e8e8" strokeWidth="1.500" />
          </svg>
        </div>
      </div>
      <Toolbar />
      <FormatBar />
      <div className="flex h-[847px]">
        <ToolIcons />
        <Center />
        <RightPanel />
      </div>
      <div className="flex h-[31px] items-center bg-[#383838] pl-[21px] text-[14.15px] text-[#c4c4c4]">
        <span>
          'hola' seleccionados. <b className="text-white">Arrastrar</b> para mover la selección. <b className="text-white">Hacer clic</b> en un objeto para seleccionarlo. <b className="text-white">Hacer clic</b> en un área vacía para omitir la selección.
        </span>
      </div>
      <Taskbar />
      <FontDropdown />
      <div className="absolute left-[132px] top-[145px] z-20 flex h-[30px] w-[136px] items-center bg-[#f0f0f6] pl-[8px] pt-[2px] text-[14px] text-[#555]">Familia de fuentes</div>
    </div>
  );
}
